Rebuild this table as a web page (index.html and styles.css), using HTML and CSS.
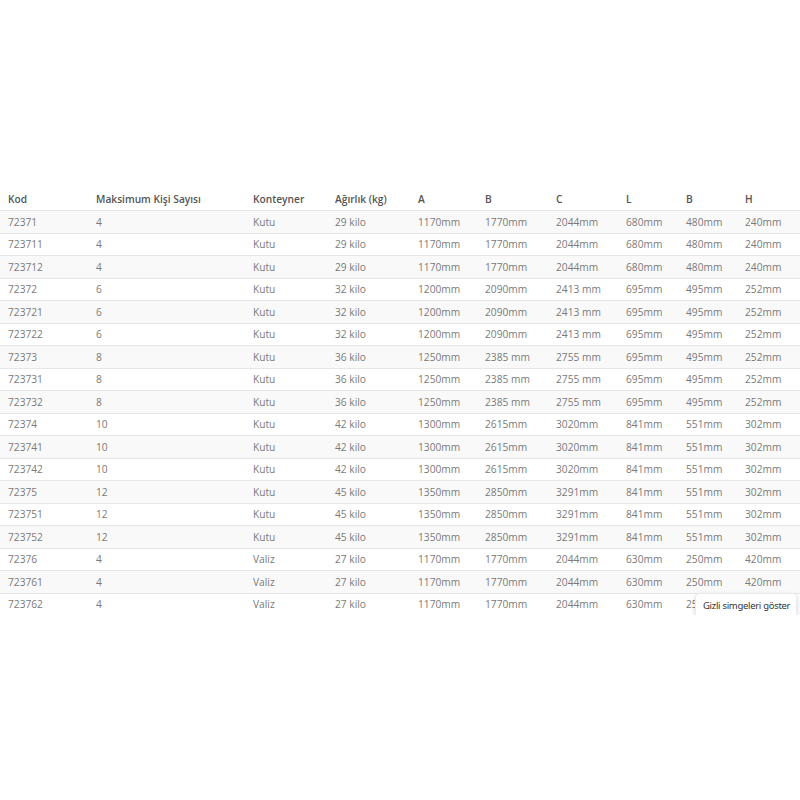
FILE: index.html
```html
<!DOCTYPE html>
<html lang="tr">
<head>
<meta charset="utf-8">
<link rel="stylesheet" href="styles.css">
</head>
<body>
<div class="wrap">
<table class="spec">
<colgroup>
<col class="c1"><col class="c2"><col class="c3"><col class="c4"><col class="c5"><col class="c6"><col class="c7"><col class="c8"><col class="c9"><col class="c10">
</colgroup>
<thead>
<tr><th>Kod</th><th>Maksimum Kişi Sayısı</th><th>Konteyner</th><th>Ağırlık (kg)</th><th>A</th><th>B</th><th>C</th><th>L</th><th>B</th><th>H</th></tr>
</thead>
<tbody>
<tr><td>72371</td><td>4</td><td>Kutu</td><td>29 kilo</td><td>1170mm</td><td>1770mm</td><td>2044mm</td><td>680mm</td><td>480mm</td><td>240mm</td></tr>
<tr><td>723711</td><td>4</td><td>Kutu</td><td>29 kilo</td><td>1170mm</td><td>1770mm</td><td>2044mm</td><td>680mm</td><td>480mm</td><td>240mm</td></tr>
<tr><td>723712</td><td>4</td><td>Kutu</td><td>29 kilo</td><td>1170mm</td><td>1770mm</td><td>2044mm</td><td>680mm</td><td>480mm</td><td>240mm</td></tr>
<tr><td>72372</td><td>6</td><td>Kutu</td><td>32 kilo</td><td>1200mm</td><td>2090mm</td><td>2413 mm</td><td>695mm</td><td>495mm</td><td>252mm</td></tr>
<tr><td>723721</td><td>6</td><td>Kutu</td><td>32 kilo</td><td>1200mm</td><td>2090mm</td><td>2413 mm</td><td>695mm</td><td>495mm</td><td>252mm</td></tr>
<tr><td>723722</td><td>6</td><td>Kutu</td><td>32 kilo</td><td>1200mm</td><td>2090mm</td><td>2413 mm</td><td>695mm</td><td>495mm</td><td>252mm</td></tr>
<tr><td>72373</td><td>8</td><td>Kutu</td><td>36 kilo</td><td>1250mm</td><td>2385 mm</td><td>2755 mm</td><td>695mm</td><td>495mm</td><td>252mm</td></tr>
<tr><td>723731</td><td>8</td><td>Kutu</td><td>36 kilo</td><td>1250mm</td><td>2385 mm</td><td>2755 mm</td><td>695mm</td><td>495mm</td><td>252mm</td></tr>
<tr><td>723732</td><td>8</td><td>Kutu</td><td>36 kilo</td><td>1250mm</td><td>2385 mm</td><td>2755 mm</td><td>695mm</td><td>495mm</td><td>252mm</td></tr>
<tr><td>72374</td><td>10</td><td>Kutu</td><td>42 kilo</td><td>1300mm</td><td>2615mm</td><td>3020mm</td><td>841mm</td><td>551mm</td><td>302mm</td></tr>
<tr><td>723741</td><td>10</td><td>Kutu</td><td>42 kilo</td><td>1300mm</td><td>2615mm</td><td>3020mm</td><td>841mm</td><td>551mm</td><td>302mm</td></tr>
<tr><td>723742</td><td>10</td><td>Kutu</td><td>42 kilo</td><td>1300mm</td><td>2615mm</td><td>3020mm</td><td>841mm</td><td>551mm</td><td>302mm</td></tr>
<tr><td>72375</td><td>12</td><td>Kutu</td><td>45 kilo</td><td>1350mm</td><td>2850mm</td><td>3291mm</td><td>841mm</td><td>551mm</td><td>302mm</td></tr>
<tr><td>723751</td><td>12</td><td>Kutu</td><td>45 kilo</td><td>1350mm</td><td>2850mm</td><td>3291mm</td><td>841mm</td><td>551mm</td><td>302mm</td></tr>
<tr><td>723752</td><td>12</td><td>Kutu</td><td>45 kilo</td><td>1350mm</td><td>2850mm</td><td>3291mm</td><td>841mm</td><td>551mm</td><td>302mm</td></tr>
<tr><td>72376</td><td>4</td><td>Valiz</td><td>27 kilo</td><td>1170mm</td><td>1770mm</td><td>2044mm</td><td>630mm</td><td>250mm</td><td>420mm</td></tr>
<tr><td>723761</td><td>4</td><td>Valiz</td><td>27 kilo</td><td>1170mm</td><td>1770mm</td><td>2044mm</td><td>630mm</td><td>250mm</td><td>420mm</td></tr>
<tr><td>723762</td><td>4</td><td>Valiz</td><td>27 kilo</td><td>1170mm</td><td>1770mm</td><td>2044mm</td><td>630mm</td><td>250mm</td><td>420mm</td></tr>
</tbody>
</table>
<div class="tooltip">Gizli simgeleri göster</div>
</div>
</body>
</html>
```
FILE: styles.css
```css
html, body {
  margin: 0;
  padding: 0;
  background: #fff;
}
.wrap {
  position: relative;
  padding-top: 188px;
  width: 800px;
}
.spec {
  width: 800px;
  border-collapse: collapse;
  table-layout: fixed;
  font-family: "Open Sans", "Liberation Sans", sans-serif;
  font-size: 10.2px;
  color: #7a7a7a;
}
.c1 { width: 88px; }
.c2 { width: 157px; }
.c3 { width: 82px; }
.c4 { width: 83px; }
.c5 { width: 67px; }
.c6 { width: 71px; }
.c7 { width: 70px; }
.c8 { width: 60px; }
.c9 { width: 59px; }
.c10 { width: 63px; }
.spec th {
  text-align: left;
  font-weight: 600;
  color: #555;
  padding: 0 0 0 8px;
  height: 22px;
  border-bottom: 1px solid #e6e6e6;
  white-space: nowrap;
}
.spec td {
  padding: 0 0 0 8px;
  height: 21.5px;
  border-top: 1px solid #e6e6e6;
  white-space: nowrap;
  overflow: hidden;
}
.spec tbody tr:nth-child(odd) td {
  background: #f9f9f9;
}
.tooltip {
  position: absolute;
  left: 695px;
  top: 593px;
  padding: 6px 6px 7px 7px;
  background: #fff;
  border: 1px solid #ececec;
  border-radius: 4px;
  box-shadow: 0 2px 5px rgba(0,0,0,0.16);
  font-family: "Noto Sans", "Open Sans", sans-serif;
  font-size: 9.5px;
  letter-spacing: -0.3px;
  line-height: 12px;
  color: #333;
  white-space: nowrap;
}
```
